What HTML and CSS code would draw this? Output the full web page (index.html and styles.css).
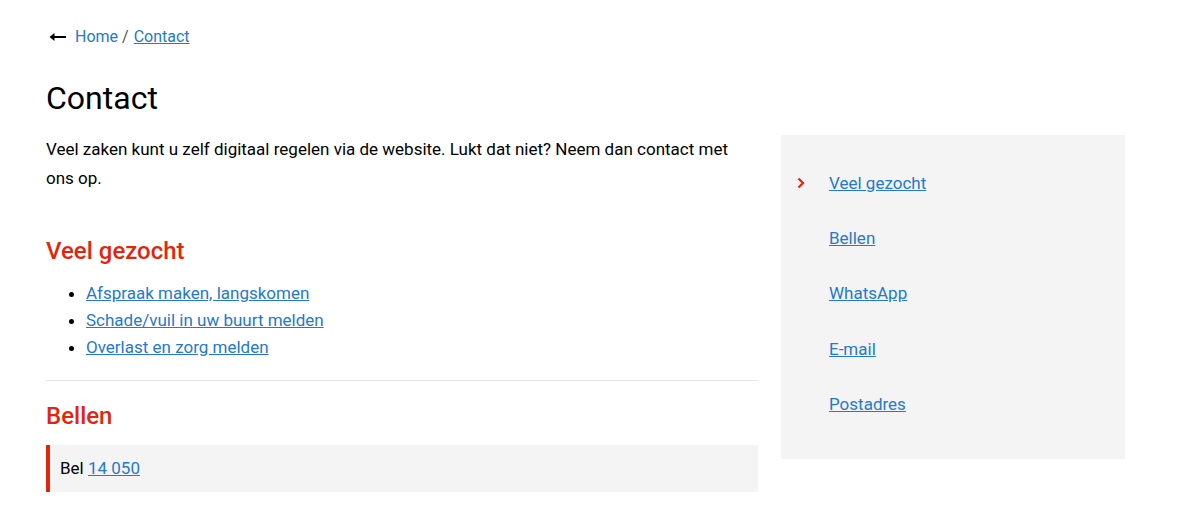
FILE: index.html
```html
<!DOCTYPE html>
<html lang="nl">
<head>
  <meta charset="UTF-8">
  <meta name="viewport" content="width=device-width, initial-scale=1.0">
  <title>Contact</title>
  <link rel="stylesheet" href="styles.css">
</head>
<body>
  <div class="page">
    <nav class="breadcrumb">
      <svg class="back-arrow" width="17" height="10" viewBox="0 0 17 10" aria-hidden="true">
        <path d="M17 5H4" fill="none" stroke="#000" stroke-width="2"/>
        <path d="M0.5 5L5.5 1V9Z" fill="#000"/>
      </svg>
      <a href="#" class="crumb">Home</a>
      <span class="sep">/</span>
      <a href="#" class="crumb current">Contact</a>
    </nav>

    <h1>Contact</h1>

    <div class="layout">
      <main class="content">
        <p class="intro">Veel zaken kunt u zelf digitaal regelen via de website. Lukt dat niet? Neem dan contact met ons op.</p>

        <h2 class="section-title first">Veel gezocht</h2>
        <ul class="link-list">
          <li><a href="#">Afspraak maken, langskomen</a></li>
          <li><a href="#">Schade/vuil in uw buurt melden</a></li>
          <li><a href="#">Overlast en zorg melden</a></li>
        </ul>

        <hr class="divider">

        <h2 class="section-title">Bellen</h2>
        <div class="call-box">Bel <a href="#">14 050</a></div>
      </main>

      <aside class="sidebar">
        <ul class="side-nav">
          <li class="active">
            <svg class="chevron" width="8" height="12" viewBox="0 0 8 12" aria-hidden="true">
              <path d="M1.5 1.5L6 6L1.5 10.5" fill="none" stroke="#e2260d" stroke-width="2.2"/>
            </svg>
            <a href="#">Veel gezocht</a>
          </li>
          <li><span></span><a href="#">Bellen</a></li>
          <li><span></span><a href="#">WhatsApp</a></li>
          <li><span></span><a href="#">E-mail</a></li>
          <li><span></span><a href="#">Postadres</a></li>
        </ul>
      </aside>
    </div>
  </div>
</body>
</html>
```

FILE: styles.css
```css
body {
  font-family: Roboto, "Liberation Sans", sans-serif;
  background-color: white;
  color: #000;
  margin: 0;
}
a {
  color: #2479cc;
}
.page {
  padding: 25px 0 0 46px;
  width: 1079px;
}
.breadcrumb {
  display: flex;
  align-items: center;
  font-size: 16px;
  line-height: 24px;
  height: 24px;
}
.back-arrow {
  margin: 0 9px 0 3px;
}
.crumb {
  text-decoration: none;
}
.crumb.current {
  text-decoration: underline;
}
.sep {
  color: #555;
  margin: 0 5px 0 4px;
}
h1 {
  font-size: 32px;
  font-weight: 400;
  line-height: 40px;
  margin: 29px 0 17px;
}
.layout {
  display: flex;
  align-items: flex-start;
  gap: 23px;
}
.content {
  width: 712px;
}
.intro {
  font-size: 17px;
  line-height: 29px;
  margin: 0;
}
.section-title {
  color: #e2260d;
  font-size: 24px;
  font-weight: 500;
  line-height: 32px;
  margin: 0 0 13px;
}
.section-title.first {
  margin-top: 42px;
}
.link-list {
  margin: 0;
  padding-left: 40px;
  font-size: 17px;
  line-height: 27px;
}
.divider {
  border: none;
  border-top: 1px solid #e4e4e4;
  margin: 19px 0 19px;
}
.call-box {
  background: #f4f4f4;
  border-left: 4px solid #e2260d;
  padding: 12px 10px;
  font-size: 17px;
  line-height: 23px;
}
.sidebar {
  width: 344px;
  background: #f4f4f4;
}
.side-nav {
  list-style: none;
  margin: 0;
  padding: 20px 0 28px 16px;
}
.side-nav li {
  display: grid;
  grid-template-columns: 32px auto;
  align-items: center;
  justify-items: start;
  height: 55.3px;
  font-size: 17px;
  line-height: 24px;
}
```
